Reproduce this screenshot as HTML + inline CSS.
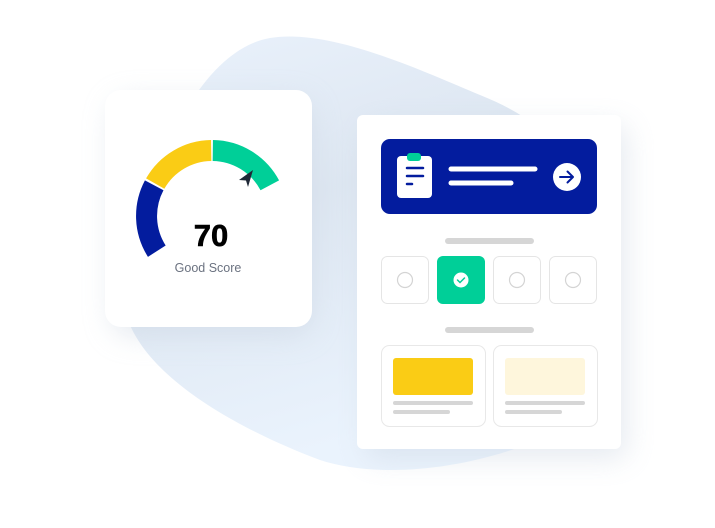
<!DOCTYPE html>
<html><head><meta charset="utf-8"><style>
html,body{margin:0;padding:0;background:#fff;width:715px;height:528px;overflow:hidden;font-family:"Liberation Sans",sans-serif}
.abs{position:absolute}
</style></head><body>
<div class="abs" style="left:0;top:0;width:715px;height:528px">
<svg class="abs" style="left:0;top:0" width="715" height="528">
<defs>
<linearGradient id="bg" x1="0" y1="0" x2="0.3" y2="1">
<stop offset="0" stop-color="#eaf2fc"/><stop offset="0.45" stop-color="#dde6f1"/><stop offset="1" stop-color="#eaf3fd"/></linearGradient>
<filter id="sh" x="-30%" y="-30%" width="160%" height="160%"><feGaussianBlur stdDeviation="14"/></filter>
</defs>
<path d="M270 38 C330 28 420 70 480 95 C530 115 560 140 560 170 L560 430 C480 470 380 480 320 460 C240 430 150 380 128 320 C110 260 150 180 180 120 C205 75 235 44 270 38 Z" fill="url(#bg)"/>
<rect x="112" y="100" width="200" height="235" rx="18" fill="#c9d3e0" opacity="0.5" filter="url(#sh)"/>
<rect x="365" y="125" width="262" height="334" rx="10" fill="#c9d3e0" opacity="0.45" filter="url(#sh)"/>
</svg>
<div class="abs" style="left:105px;top:90px;width:207px;height:237px;background:#fff;border-radius:16px"></div>
<svg class="abs" style="left:0;top:0" width="715" height="528">
<g fill="none" stroke-width="21">
<path d="M156.8 251.2 A65.5 65.5 0 0 1 154.2 185.3" stroke="#031c9e"/>
<path d="M155.2 183.6 A65.5 65.5 0 0 1 211.2 150.5" stroke="#facc15"/>
<path d="M212.8 150.5 A65.5 65.5 0 0 1 269.8 185.3" stroke="#00cf98"/>
</g>
<path d="M253 170 L239 180 L246 180.5 L248 187 Z" fill="#1f2937"/>
<text x="211" y="246" text-anchor="middle" font-family="Liberation Sans" font-weight="bold" font-size="31" fill="#000" stroke="#000" stroke-width="0.6">70</text>
<text x="208" y="272" text-anchor="middle" font-family="Liberation Sans" font-size="12.5" fill="#6b7280">Good Score</text>
</svg>
<div class="abs" style="left:357px;top:115px;width:264px;height:334px;background:#fff;border-radius:6px"></div>
<svg class="abs" style="left:0;top:0" width="715" height="528">
<rect x="381" y="139" width="216" height="75" rx="9" fill="#031c9e"/>
<rect x="397" y="156" width="35" height="42" rx="4" fill="#fff"/>
<rect x="407" y="153" width="14" height="8" rx="3" fill="#00cf98"/>
<g stroke="#031c9e" stroke-width="2.5" stroke-linecap="round">
<line x1="407" y1="168" x2="423" y2="168"/><line x1="407" y1="176" x2="423" y2="176"/><line x1="407" y1="184" x2="412" y2="184"/></g>
<g stroke="#fff" stroke-width="5" stroke-linecap="round">
<line x1="451" y1="169" x2="535" y2="169"/><line x1="451" y1="183" x2="511" y2="183"/></g>
<circle cx="567" cy="177" r="14" fill="#fff"/>
<path d="M560 177 H573 M567.5 171.5 L573 177 L567.5 182.5" fill="none" stroke="#031c9e" stroke-width="2" stroke-linecap="round" stroke-linejoin="round"/>
<rect x="445" y="238" width="89" height="6" rx="3" fill="#d6d6d6"/>
<g fill="#fff" stroke="#e5e5e5" stroke-width="1">
<rect x="381.5" y="256.5" width="47" height="47" rx="6"/>
<rect x="493.5" y="256.5" width="47" height="47" rx="6"/>
<rect x="549.5" y="256.5" width="47" height="47" rx="6"/>
</g>
<rect x="437" y="256" width="48" height="48" rx="6" fill="#00cf98"/>
<g fill="none" stroke="#d4d4d4" stroke-width="1.2">
<circle cx="405" cy="280" r="7.5"/><circle cx="517" cy="280" r="7.5"/><circle cx="573" cy="280" r="7.5"/></g>
<circle cx="461" cy="280" r="7.5" fill="#fff"/>
<path d="M457.5 280 L460 282.5 L464.5 278" fill="none" stroke="#00cf98" stroke-width="1.5" stroke-linecap="round"/>
<rect x="445" y="327" width="89" height="6" rx="3" fill="#d6d6d6"/>
<g fill="#fff" stroke="#e8e8e8" stroke-width="1">
<rect x="381.5" y="345.5" width="104" height="81" rx="8"/>
<rect x="493.5" y="345.5" width="104" height="81" rx="8"/></g>
<rect x="393" y="358" width="80" height="37" rx="3" fill="#facc15"/>
<rect x="505" y="358" width="80" height="37" rx="3" fill="#fef6dc"/>
<g fill="#d6d6d6">
<rect x="393" y="401" width="80" height="4" rx="2"/><rect x="393" y="410" width="57" height="4" rx="2"/>
<rect x="505" y="401" width="80" height="4" rx="2"/><rect x="505" y="410" width="57" height="4" rx="2"/></g>
</svg>
</div>
</body></html>
